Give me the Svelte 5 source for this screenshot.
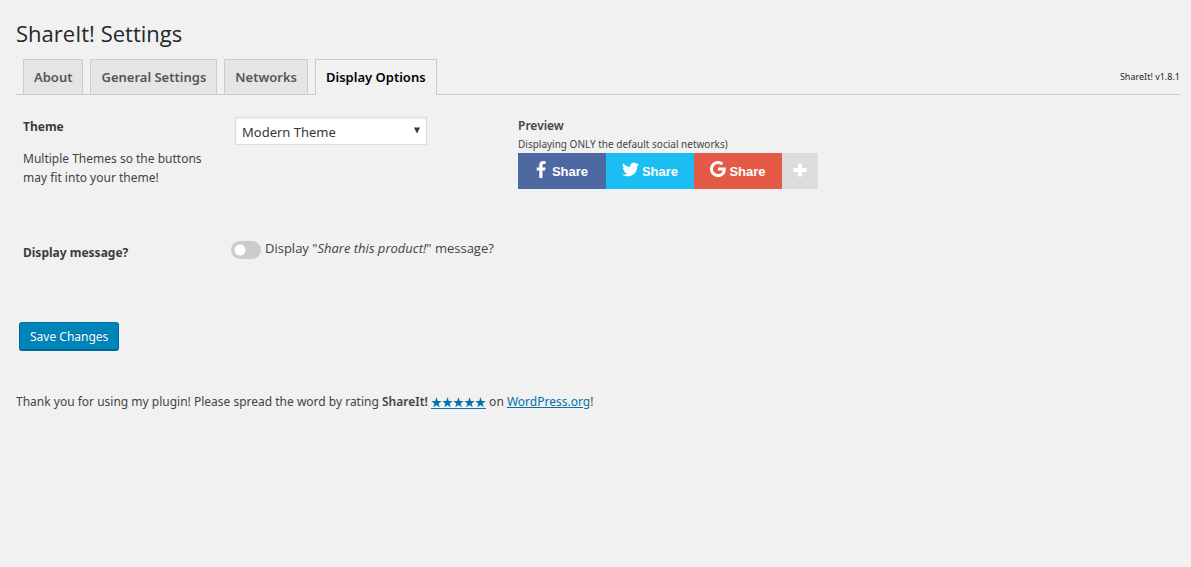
<script>
  const tabs = ['About', 'General Settings', 'Networks', 'Display Options'];
  let active = $state('Display Options');
  let theme = $state('Modern Theme');
  let showMessage = $state(false);
</script>

<main class="wrap">
  <h1>ShareIt! Settings</h1>

  <div class="tab-bar">
    <nav class="tabs">
      {#each tabs as tab}
        <a href="#settings" class="tab" class:active={tab === active} onclick={() => (active = tab)}>{tab}</a>
      {/each}
    </nav>
    <span class="version">ShareIt! v1.8.1</span>
  </div>

  <form>
    <section class="row theme-row">
      <div class="label-cell">
        <label class="heading" for="theme">Theme</label>
        <p>Multiple Themes so the buttons may fit into your theme!</p>
      </div>
      <div class="control-cell">
        <div class="select-box">
          <select id="theme" bind:value={theme}>
            <option>Modern Theme</option>
            <option>Classic Theme</option>
          </select>
          <svg class="arrow" viewBox="0 0 6 7" aria-hidden="true"><path d="M0 0.5H6L3 6.5Z" fill="#32373c" /></svg>
        </div>
      </div>
      <div class="preview">
        <h2>Preview</h2>
        <p>Displaying ONLY the default social networks)</p>
        <div class="share-buttons">
          <button type="button" class="share facebook">
            <svg class="f" viewBox="0 0 10 17" aria-hidden="true"><path d="M9.6 0.2V3H8C6.7 3 6.5 3.6 6.5 4.5V6.4H9.5L9.1 9.5H6.5V17H3.3V9.5H0.7V6.4H3.3V4.1C3.3 1.5 4.9 0 7.2 0C8.4 0 9.3 0.1 9.6 0.2Z" /></svg>
            <span>Share</span>
          </button>
          <button type="button" class="share twitter">
            <svg class="t" viewBox="0 0 24 24" aria-hidden="true"><path d="M24 4.6a10 10 0 0 1-2.8.8 5 5 0 0 0 2.1-2.7c-.9.5-2 1-3.1 1.2a4.9 4.9 0 0 0-8.4 4.5A14 14 0 0 1 1.7 3.2 4.9 4.9 0 0 0 3.2 9.7c-.8 0-1.6-.2-2.2-.6v.1a4.9 4.9 0 0 0 3.9 4.8 5 5 0 0 1-2.2.1 4.9 4.9 0 0 0 4.6 3.4A9.9 9.9 0 0 1 0 19.5 14 14 0 0 0 7.5 21.7c9.1 0 14-7.5 14-14v-.6A10 10 0 0 0 24 4.6Z" /></svg>
            <span>Share</span>
          </button>
          <button type="button" class="share google">
            <svg class="g" viewBox="0 0 16 16" aria-hidden="true"><path d="M8 6.6H15.7C15.8 7.1 15.8 7.5 15.8 8.2C15.8 12.8 12.7 16 8 16A8 8 0 1 1 13.4 2.1L11.2 4.2C10.4 3.4 9.3 3 8 3A5.05 5.05 0 0 0 8 13.1C11.2 13.1 12.4 10.8 12.6 9.4H8Z" /></svg>
            <span>Share</span>
          </button>
          <button type="button" class="share more" aria-label="More networks">
            <svg class="p" viewBox="0 0 14 14" aria-hidden="true"><path d="M5.5 0.5H8.5Q9 0.5 9 1V5H13Q13.5 5 13.5 5.5V8.5Q13.5 9 13 9H9V13Q9 13.5 8.5 13.5H5.5Q5 13.5 5 13V9H1Q0.5 9 0.5 8.5V5.5Q0.5 5 1 5H5V1Q5 0.5 5.5 0.5Z" /></svg>
          </button>
        </div>
      </div>
    </section>

    <section class="row message-row">
      <div class="heading message-heading">Display message?</div>
      <label class="toggle">
        <input type="checkbox" bind:checked={showMessage} />
        <span>Display "<em>Share this product!</em>" message?</span>
      </label>
    </section>

    <button type="button" class="save">Save Changes</button>
  </form>

  <footer>
    Thank you for using my plugin! Please spread the word by rating <strong>ShareIt!</strong>
    <a href="#rate" class="stars" aria-label="Five stars">
      {#each Array(5) as _}<svg viewBox="0 0 11 11" aria-hidden="true"><path d="M5.5 0.3L6.8 4H10.7L7.6 6.4L8.7 10.2L5.5 7.9L2.3 10.2L3.4 6.4L0.3 4H4.2Z" /></svg>{/each}
    </a>
    on <a href="#wordpress">WordPress.org</a>!
  </footer>
</main>

<style>
  :global(body) {
    background: #f1f1f1;
  }
  .wrap {
    padding: 20px 11px 20px 16px;
    color: #444;
    font: 12px/19px "Noto Sans", "Open Sans", sans-serif;
  }
  h1 {
    margin: 0;
    font-family: "Open Sans", "Noto Sans", sans-serif;
    font-size: 22px;
    font-weight: 400;
    line-height: 26px;
    color: #23282d;
  }
  .tab-bar {
    display: flex;
    justify-content: space-between;
    align-items: center;
    margin-top: 13px;
    padding-left: 7px;
    border-bottom: 1px solid #ccc;
  }
  .tabs {
    display: flex;
    gap: 7px;
    margin-bottom: -1px;
  }
  .tab {
    padding: 6px 10px;
    border: 1px solid #ccc;
    background: #e5e5e5;
    color: #555;
    font-size: 13px;
    font-weight: 600;
    line-height: 22px;
    text-decoration: none;
  }
  .tab.active {
    border-bottom-color: #f1f1f1;
    background: #f1f1f1;
    color: #000;
  }
  .version {
    font-size: 9px;
    color: #23282d;
  }
  .row {
    display: grid;
    padding-left: 7px;
  }
  .theme-row {
    grid-template-columns: 212px 283px 1fr;
    padding-top: 22px;
  }
  .heading {
    font-weight: 700;
    color: #3c3c3c;
  }
  .label-cell p {
    margin: 13px 24px 0 0;
  }
  .select-box {
    position: relative;
    width: 192px;
  }
  select {
    display: block;
    width: 100%;
    height: 28px;
    padding: 3px 6px 1px;
    appearance: none;
    border: 1px solid #ddd;
    border-radius: 0;
    background: #fff;
    box-shadow: inset 0 1px 2px rgba(0, 0, 0, 0.07);
    color: #32373c;
    font: inherit;
    font-size: 13px;
  }
  .arrow {
    position: absolute;
    top: 10px;
    right: 7px;
    width: 6px;
    height: 7px;
    pointer-events: none;
  }
  .preview h2 {
    margin: 0;
    font-size: 12px;
    font-weight: 600;
    line-height: 18px;
  }
  .preview p {
    margin: 0;
    font-size: 10px;
    line-height: 18px;
  }
  .share-buttons {
    display: flex;
  }
  .share {
    display: flex;
    align-items: center;
    justify-content: center;
    gap: 6px;
    width: 88px;
    height: 36px;
    padding: 0;
    border: 0;
    color: #fff;
    font: 700 13px/16px "Liberation Sans", Arial, sans-serif;
  }
  .share span {
    padding-top: 2px;
  }
  .share svg {
    height: 17px;
    margin-bottom: 4px;
    fill: #fff;
  }
  .share .f {
    width: 10px;
  }
  .share .t {
    width: 17px;
  }
  .share .g {
    width: 16px;
    height: 16px;
  }
  .share .p {
    width: 14px;
    height: 14px;
    margin: 0 0 2px;
  }
  .facebook {
    background: #4e68a1;
  }
  .twitter,
  .google {
    gap: 3px;
  }
  .twitter {
    background: #1cbdf2;
  }
  .google {
    background: #e35b47;
  }
  .more {
    width: 36px;
    background: #ddd;
  }
  .message-row {
    grid-template-columns: 208px 1fr;
    margin-top: 50px;
  }
  .message-heading {
    padding-top: 4px;
  }
  .toggle {
    display: flex;
    gap: 4px;
    font-family: "Open Sans", "Noto Sans", sans-serif;
    font-size: 13px;
  }
  .toggle em {
    font-weight: 500;
  }
  .toggle input {
    width: 30px;
    height: 18px;
    margin: 2px 0 0;
    appearance: none;
    border-radius: 9px;
    background: radial-gradient(circle at 9px 9px, #fff 5px, transparent 6px) #ccc;
  }
  .toggle input:checked {
    background: radial-gradient(circle at 21px 9px, #fff 5px, transparent 6px) #0085ba;
  }
  .save {
    display: block;
    height: 29px;
    margin: 60px 0 0 3px;
    padding: 1px 10px 0;
    border: 1px solid #006799;
    border-top-color: #0073aa;
    border-bottom-width: 2px;
    border-radius: 3px;
    background: #0085ba;
    color: #fff;
    font: inherit;
    text-shadow: 0 -1px 1px #006799;
  }
  footer {
    margin-top: 41px;
  }
  footer strong {
    font-weight: 600;
  }
  footer a {
    color: #0073aa;
  }
  .stars {
    display: inline-flex;
    border-bottom: 1px solid #0073aa;
    vertical-align: -2px;
  }
  .stars svg {
    width: 11px;
    height: 11px;
    fill: #0073aa;
  }
</style>
